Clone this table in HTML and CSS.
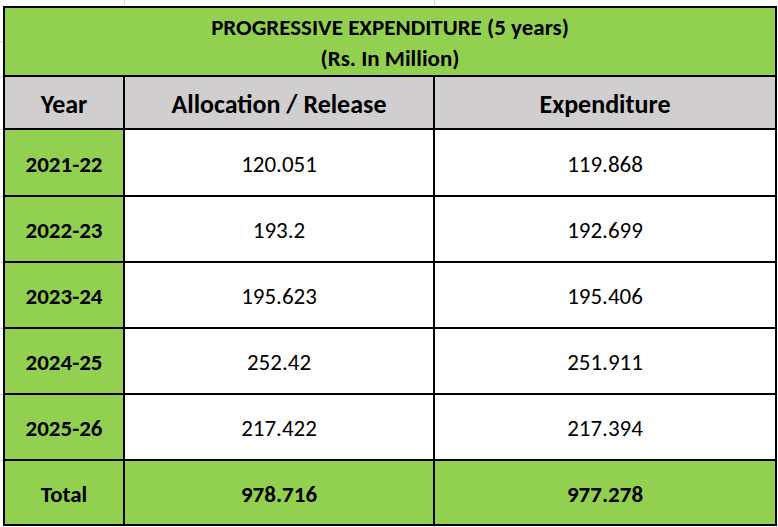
FILE: index.html
```html
<!DOCTYPE html>
<html lang="en">
<head>
<meta charset="utf-8">
<title>Progressive Expenditure</title>
<link rel="stylesheet" href="styles.css">
</head>
<body>
<div class="sheet">
  <div class="cell title"><span>PROGRESSIVE EXPENDITURE (5 years)</span><span>(Rs. In Million)</span></div>
  <div class="cell head">Year</div>
  <div class="cell head">Allocation / Release</div>
  <div class="cell head last">Expenditure</div>

  <div class="cell year">2021-22</div>
  <div class="cell num">120.051</div>
  <div class="cell num last">119.868</div>

  <div class="cell year">2022-23</div>
  <div class="cell num">193.2</div>
  <div class="cell num last">192.699</div>

  <div class="cell year">2023-24</div>
  <div class="cell num">195.623</div>
  <div class="cell num last">195.406</div>

  <div class="cell year">2024-25</div>
  <div class="cell num">252.42</div>
  <div class="cell num last">251.911</div>

  <div class="cell year">2025-26</div>
  <div class="cell num">217.422</div>
  <div class="cell num last">217.394</div>

  <div class="cell year total">Total</div>
  <div class="cell num total">978.716</div>
  <div class="cell num total last">977.278</div>
</div>
</body>
</html>
```

FILE: styles.css
```css
html, body {
  margin: 0;
  height: 100%;
}
body {
  padding: 6px 0 0 3px;
  box-sizing: border-box;
  background-color: #fff;
  background-image:
    linear-gradient(#d9d9d9, #d9d9d9),
    linear-gradient(#d9d9d9, #d9d9d9),
    linear-gradient(#d9d9d9, #d9d9d9),
    linear-gradient(#d9d9d9, #d9d9d9),
    linear-gradient(#d9d9d9, #d9d9d9),
    linear-gradient(#d9d9d9, #d9d9d9),
    linear-gradient(#d9d9d9, #d9d9d9),
    linear-gradient(#d9d9d9, #d9d9d9),
    linear-gradient(#d9d9d9, #d9d9d9),
    linear-gradient(#d9d9d9, #d9d9d9);
  background-size:
    1px 100%, 1px 100%,
    100% 1px, 100% 1px, 100% 1px, 100% 1px, 100% 1px, 100% 1px, 100% 1px, 100% 1px;
  background-position:
    124px 0, 434px 0,
    0 41px, 0 76px, 0 129px, 0 196px, 0 262px, 0 328px, 0 394px, 0 460px;
  background-repeat: no-repeat;
  font-family: Carlito, Lato, "Liberation Sans", sans-serif;
  color: #000;
}
.sheet {
  display: grid;
  grid-template-columns: 120px 310px 340px;
  grid-template-rows: 69px 53px 67px 66px 66px 66px 66px 63px;
  width: 774px;
  border: 2px solid #000;
  box-sizing: border-box;
  background: #fff;
}
.cell {
  box-sizing: border-box;
  border-right: 2px solid #000;
  border-bottom: 2px solid #000;
  display: flex;
  align-items: center;
  justify-content: center;
  padding-top: 2px;
  font-size: 23px;
}
.cell.last {
  border-right: 0;
}
.cell.total {
  border-bottom: 0;
  background: #92d050;
  font-weight: 700;
}
.title {
  grid-column: 1 / 4;
  border-right: 0;
  background: #92d050;
  flex-direction: column;
  font-weight: 700;
  font-size: 23px;
  line-height: 31px;
}
.head {
  background: #d0cece;
  font-weight: 700;
  font-size: 26px;
}
.year {
  background: #92d050;
  font-weight: 700;
}
```
